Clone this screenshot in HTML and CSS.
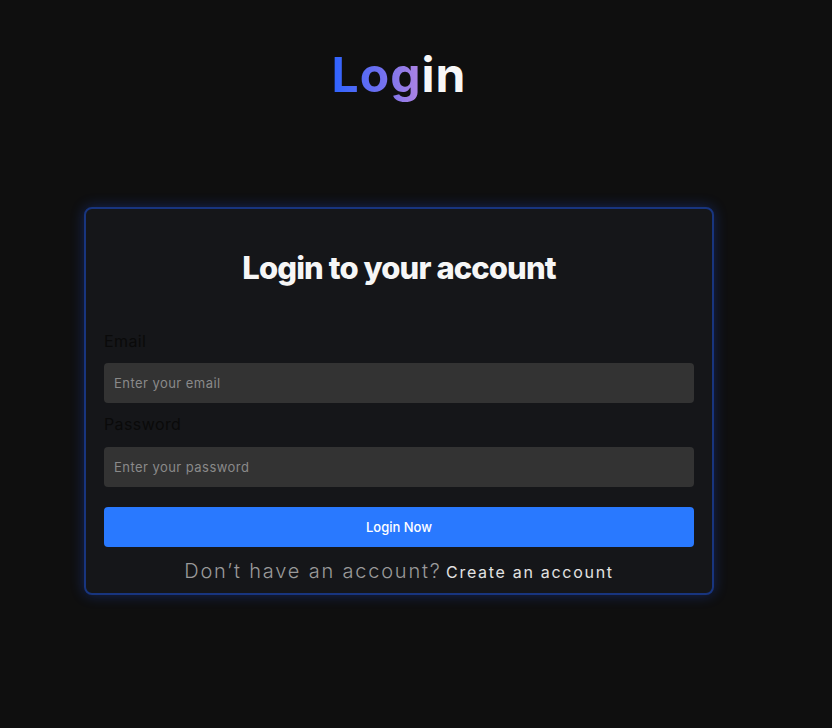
FILE: index.html
```html
<!DOCTYPE html>
<html lang="en">
<head>
<meta charset="utf-8">
<title>Login</title>
<link rel="stylesheet" href="styles.css">
</head>
<body>
<div class="page">
  <h1 class="brand"><span class="grad">Log</span><span class="white">in</span></h1>
  <form class="card">
    <h2 class="card-title">Login to your account</h2>
    <label class="label" for="email">Email</label>
    <input class="input" id="email" type="email" placeholder="Enter your email">
    <label class="label" for="pw">Password</label>
    <input class="input" id="pw" type="password" placeholder="Enter your password">
    <button class="btn" type="button">Login Now</button>
    <p class="footer"><span class="muted">Don’t have an account?</span> <a class="link" href="#">Create an account</a></p>
  </form>
</div>
</body>
</html>
```
FILE: styles.css
```css
* { box-sizing: border-box; }
html, body { margin: 0; padding: 0; }
body {
  background: #0f0f0f;
  font-family: "Inter", "Open Sans", sans-serif;
  width: 832px;
  height: 728px;
  overflow: hidden;
}
.page {
  width: 798px;
  display: flex;
  flex-direction: column;
  align-items: center;
}
.brand {
  margin: 39px 0 0;
  font-size: 48px;
  line-height: 72px;
  font-weight: 700;
  letter-spacing: 1px;
}
.grad {
  background: linear-gradient(90deg, #2d63ff 0%, #6b6ff0 50%, #b184e2 100%);
  -webkit-background-clip: text;
  background-clip: text;
  color: transparent;
}
.white { color: #f7f7f7; }
.card {
  margin-top: 96px;
  width: 630px;
  background: #151619;
  border: 2px solid #18357f;
  border-radius: 8px;
  box-shadow: 0 0 14px rgba(37, 90, 255, 0.3);
  padding: 18px 18px 6px;
  display: flex;
  flex-direction: column;
}
.card-title {
  margin: 17px 0 37px;
  text-align: center;
  color: #f6f6f6;
  font-size: 31px;
  line-height: 48px;
  font-weight: 800;
  letter-spacing: -0.9px;
}
.label {
  color: #0a0a0a;
  font-size: 16px;
  line-height: 24px;
  margin-bottom: 10px;
  letter-spacing: 0.4px;
}
.input {
  height: 40px;
  border: none;
  border-radius: 4px;
  background: #333333;
  padding: 0 10px;
  font-family: inherit;
  font-size: 13px;
  letter-spacing: 0.45px;
  color: #ddd;
  margin-bottom: 9px;
  outline: none;
}
.input::placeholder { color: #8a8a8a; }
#pw { margin-top: 1px; margin-bottom: 20px; }
.btn {
  height: 40px;
  border: none;
  border-radius: 4px;
  background: #2979ff;
  color: #fff;
  font-family: inherit;
  font-size: 13px;
  font-weight: 500;
}
.footer {
  margin: 9px 0 0;
  text-align: center;
  line-height: 30px;
}
.muted {
  color: #9a9a9a;
  font-size: 20px;
  font-weight: 300;
  letter-spacing: 1.8px;
}
.link {
  color: #e2e2e2;
  font-size: 16px;
  text-decoration: none;
  letter-spacing: 1.7px;
}
```
